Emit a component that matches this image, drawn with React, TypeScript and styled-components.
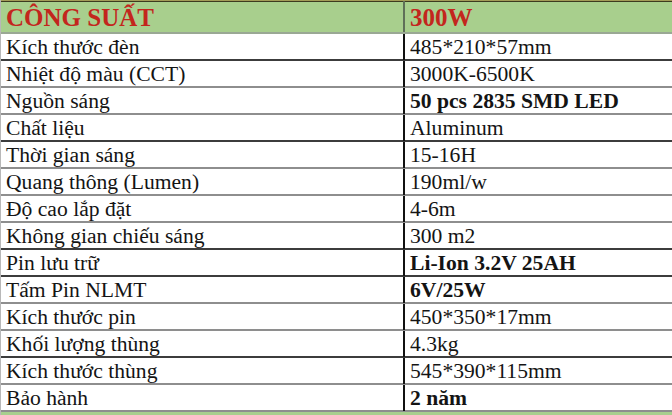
import React from "react";
import styled, { createGlobalStyle } from "styled-components";

const GlobalStyle = createGlobalStyle`
  html, body {
    margin: 0;
    padding: 0;
    background: #ffffff;
  }
  body {
    font-family: "Liberation Serif", "Times New Roman", serif;
  }
`;

type Spec = {
  label: string;
  value: string;
  bold?: boolean;
  line: "dark" | "light";
};

const specs: Spec[] = [
  { label: "Kích thước đèn", value: "485*210*57mm", line: "dark" },
  { label: "Nhiệt độ màu (CCT)", value: "3000K-6500K", line: "light" },
  { label: "Nguồn sáng", value: "50 pcs 2835 SMD LED", bold: true, line: "light" },
  { label: "Chất liệu", value: "Aluminum", line: "dark" },
  { label: "Thời gian sáng", value: "15-16H", line: "light" },
  { label: "Quang thông (Lumen)", value: "190ml/w", line: "light" },
  { label: "Độ cao lắp đặt", value: "4-6m", line: "light" },
  { label: "Không gian chiếu sáng", value: "300 m2", line: "dark" },
  { label: "Pin lưu trữ", value: "Li-Ion 3.2V 25AH", bold: true, line: "dark" },
  { label: "Tấm Pin NLMT", value: "6V/25W", bold: true, line: "light" },
  { label: "Kích thước pin", value: "450*350*17mm", line: "light" },
  { label: "Khối lượng thùng", value: "4.3kg", line: "dark" },
  { label: "Kích thước thùng", value: "545*390*115mm", line: "light" },
  { label: "Bảo hành", value: "2 năm", bold: true, line: "light" },
];

const Sheet = styled.div`
  width: 672px;
  height: 415px;
  overflow: hidden;
  border-left: 1px solid #b8b8b8;
  box-sizing: border-box;
  display: flex;
  flex-direction: column;
`;

const HeaderRow = styled.div`
  display: grid;
  grid-template-columns: 402px 1fr;
  height: 34px;
  flex: none;
  box-sizing: border-box;
  background: #a8cf8d;
  border-top: 1px solid #a39c58;
  box-shadow: inset 0 1px 0 #3d3b1f;
  border-bottom: 2px solid #9aa894;
`;

const HeaderCell = styled.div<{ $divider?: boolean }>`
  display: flex;
  align-items: center;
  padding: 2px 0 0 5px;
  font-size: 25px;
  font-weight: bold;
  color: #c3261d;
  border-left: ${(p) => (p.$divider ? "2px solid #5f7058" : "none")};
`;

const Row = styled.div<{ $line: "dark" | "light" }>`
  display: grid;
  grid-template-columns: 402px 1fr;
  height: 27px;
  flex: none;
  box-sizing: border-box;
  border-bottom: ${(p) =>
    p.$line === "dark" ? "2px solid #3c3c3c" : "2px solid #8e8e8e"};
`;

const Cell = styled.div<{ $divider?: boolean; $bold?: boolean }>`
  display: flex;
  align-items: center;
  padding: 1px 0 0 5px;
  font-size: 21.6px;
  line-height: 25px;
  color: #141414;
  font-weight: ${(p) => (p.$bold ? "bold" : "normal")};
  border-left: ${(p) => (p.$divider ? "2px solid #111111" : "none")};
  white-space: nowrap;
`;

const FooterStrip = styled.div`
  height: 3px;
  flex: none;
  background: #a8cf8d;
`;

export default function App() {
  return (
    <>
      <GlobalStyle />
      <Sheet>
        <HeaderRow>
          <HeaderCell>CÔNG SUẤT</HeaderCell>
          <HeaderCell $divider>300W</HeaderCell>
        </HeaderRow>
        {specs.map((s) => (
          <Row key={s.label} $line={s.line}>
            <Cell>{s.label}</Cell>
            <Cell $divider $bold={s.bold}>
              {s.value}
            </Cell>
          </Row>
        ))}
        <FooterStrip />
      </Sheet>
    </>
  );
}
